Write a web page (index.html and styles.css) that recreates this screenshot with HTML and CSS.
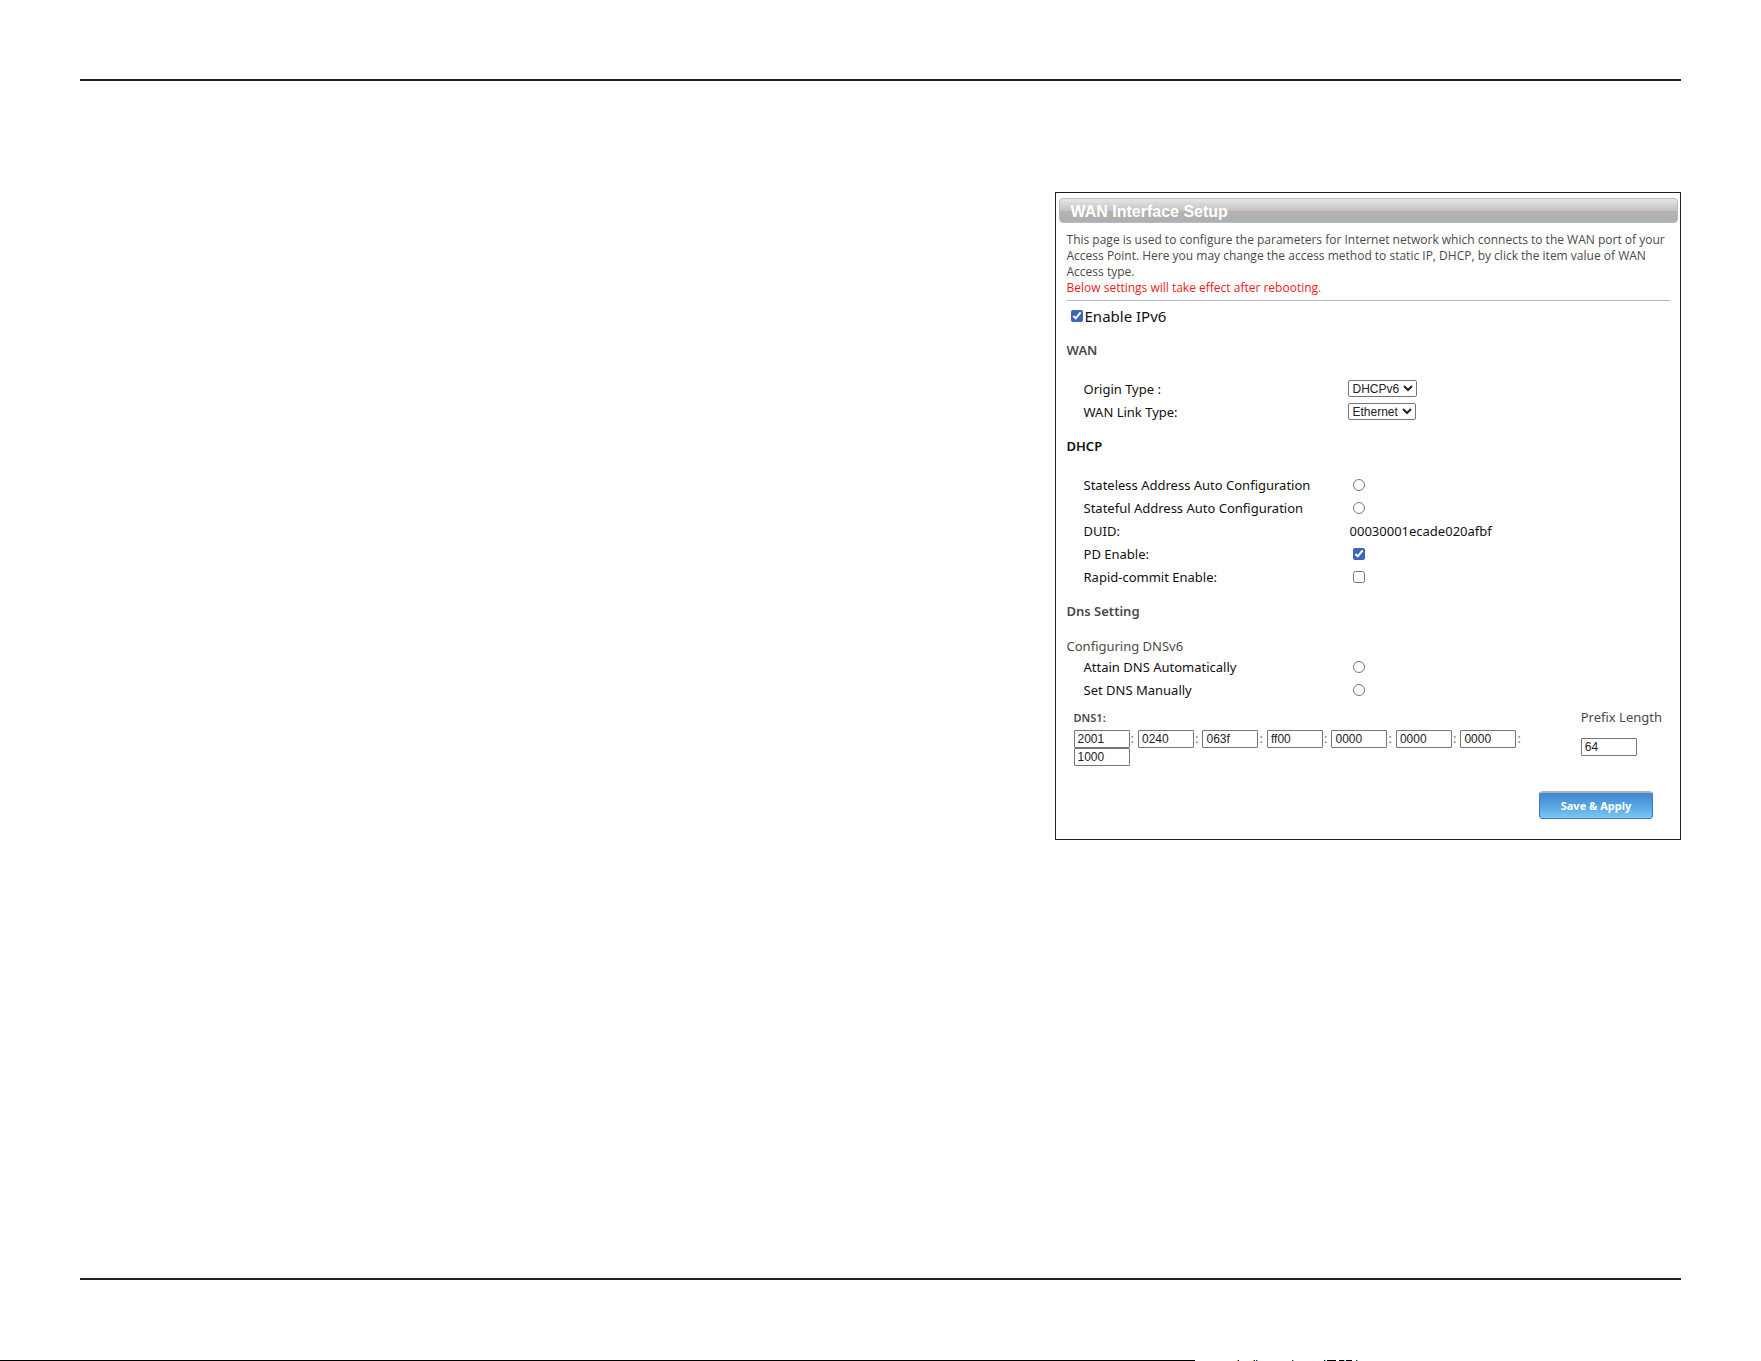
FILE: index.html
```html
<!DOCTYPE html>
<html lang="en">
<head>
    <meta charset="UTF-8">
    <meta name="viewport" content="width=device-width, initial-scale=1.0">
    <title>WAN Interface Setup</title>
    <link rel="stylesheet" href="styles.css">
</head>
<body>
    <div class="page">
        <hr class="page-rule">
        <main class="content">
            <form class="panel">
                <h1 class="panel-title">WAN Interface Setup</h1>
                <div class="panel-body">
                    <div class="intro">
                        <p>This page is used to configure the parameters for Internet network which connects to the WAN port of your Access Point. Here you may change the access method to static IP, DHCP, by click the item value of WAN Access type.</p>
                        <p class="warning">Below settings will take effect after rebooting.</p>
                    </div>

                    <div class="enable-row">
                        <input type="checkbox" id="enableIpv6" checked>
                        <label for="enableIpv6">Enable IPv6</label>
                    </div>

                    <h2>WAN</h2>
                    <div class="rows">
                        <div class="row">
                            <label for="originType">Origin Type :</label>
                            <select id="originType">
                                <option>DHCPv6</option>
                            </select>
                        </div>
                        <div class="row">
                            <label for="linkType">WAN Link Type:</label>
                            <select id="linkType">
                                <option>Ethernet</option>
                            </select>
                        </div>
                    </div>

                    <h2 class="dark">DHCP</h2>
                    <div class="rows">
                        <div class="row">
                            <label for="stateless">Stateless Address Auto Configuration</label>
                            <input type="radio" name="autoConfig" id="stateless">
                        </div>
                        <div class="row">
                            <label for="stateful">Stateful Address Auto Configuration</label>
                            <input type="radio" name="autoConfig" id="stateful">
                        </div>
                        <div class="row">
                            <span>DUID:</span>
                            <span class="duid">00030001ecade020afbf</span>
                        </div>
                        <div class="row">
                            <label for="pdEnable">PD Enable:</label>
                            <input type="checkbox" id="pdEnable" checked>
                        </div>
                        <div class="row">
                            <label for="rapidCommit">Rapid-commit Enable:</label>
                            <input type="checkbox" id="rapidCommit">
                        </div>
                    </div>

                    <h2>Dns Setting</h2>
                    <p class="sub-title">Configuring DNSv6</p>
                    <div class="rows dns-rows">
                        <div class="row">
                            <label for="dnsAuto">Attain DNS Automatically</label>
                            <input type="radio" name="dnsMode" id="dnsAuto">
                        </div>
                        <div class="row">
                            <label for="dnsManual">Set DNS Manually</label>
                            <input type="radio" name="dnsMode" id="dnsManual">
                        </div>
                    </div>

                    <div class="dns">
                        <div class="dns-address">
                            <label class="dns-label" for="dns1">DNS1:</label>
                            <div class="groups">
                                <span><input type="text" id="dns1" value="2001">:</span>
                                <span><input type="text" aria-label="DNS1 group 2" value="0240">:</span>
                                <span><input type="text" aria-label="DNS1 group 3" value="063f">:</span>
                                <span><input type="text" aria-label="DNS1 group 4" value="ff00">:</span>
                                <span><input type="text" aria-label="DNS1 group 5" value="0000">:</span>
                                <span><input type="text" aria-label="DNS1 group 6" value="0000">:</span>
                                <span><input type="text" aria-label="DNS1 group 7" value="0000">:</span>
                                <span><input type="text" aria-label="DNS1 group 8" value="1000"></span>
                            </div>
                        </div>
                        <div class="prefix">
                            <label for="prefixLength">Prefix Length</label>
                            <input type="text" id="prefixLength" value="64">
                        </div>
                    </div>

                    <div class="actions">
                        <button type="button">Save &amp; Apply</button>
                    </div>
                </div>
            </form>
        </main>
        <hr class="page-rule">
    </div>
    <svg class="page-edge" viewBox="0 0 1761 1" preserveAspectRatio="none" shape-rendering="crispEdges" aria-hidden="true">
        <rect width="1195" height="1"/>
        <rect x="1237" width="1" height="1" fill="#fa0"/>
        <rect x="1238" width="1" height="1" fill="#00c"/>
        <rect x="1253" width="1" height="1" fill="#fa0"/>
        <rect x="1254" width="1" height="1" fill="#00c"/>
        <rect x="1256" width="1" height="1" fill="#a00"/>
        <rect x="1257" width="1" height="1" fill="#0ff"/>
        <rect x="1292" width="1" height="1" fill="#a00"/>
        <rect x="1293" width="1" height="1" fill="#0ff"/>
        <rect x="1324" width="1" height="1"/>
        <rect x="1325" width="1" height="1" fill="#0ff"/>
        <rect x="1327" width="9" height="1"/>
        <rect x="1339" width="5" height="1"/>
        <rect x="1344" width="1" height="1" fill="#0ff"/>
        <rect x="1346" width="6" height="1"/>
        <rect x="1356" width="1" height="1" fill="#a00"/>
        <rect x="1357" width="1" height="1" fill="#0ff"/>
    </svg>
</body>
</html>
```
FILE: styles.css
```css
* {
    box-sizing: border-box;
}

body {
    display: flex;
    flex-direction: column;
    min-height: 100vh;
    margin: 0;
    background-color: #fff;
    color: #111;
    font-family: "Noto Sans", "Open Sans", sans-serif;
    font-size: 13px;
    line-height: 16px;
}

h1, h2, p {
    margin: 0;
}

.page {
    display: flex;
    flex-direction: column;
    flex: 1;
    padding: 79px 80px 80px;
}

.page-rule {
    width: 100%;
    height: 2px;
    margin: 0;
    border: none;
    background-color: #231f20;
}

.content {
    display: grid;
    grid-template-columns: 14fr minmax(600px, 9fr);
    align-items: start;
    flex: 1;
    padding: 111px 0;
}

.panel {
    grid-column: 2;
    padding: 5px 2px 20px 3px;
    border: 1px solid #231f20;
}

.panel-title {
    padding: 2px 0 0 11px;
    border: 1px solid #a9c0d3;
    border-radius: 4px;
    background: linear-gradient(#e8e6e4, #c6c4c2 50%, #b5b2b0 52%, #b2aeac);
    color: #fff;
    font-family: "Liberation Sans", Arial, sans-serif;
    font-size: 16px;
    line-height: 21px;
}

.panel-body {
    padding: 9px 8px 0;
}

.intro {
    padding-bottom: 4px;
    border-bottom: 1px solid #b5b5b5;
    color: #4a4a4a;
    font-family: "Open Sans", "Noto Sans", sans-serif;
    font-size: 12px;
}

.intro .warning {
    color: #ed1c24;
}

.enable-row {
    display: flex;
    align-items: center;
    gap: 2px;
    height: 30px;
    padding-left: 4px;
    font-size: 15px;
}

h2 {
    padding: 11px 0 19px;
    color: #4a4a4a;
    font-size: 13px;
    font-weight: 600;
    line-height: 16px;
}

h2.dark {
    color: #111;
}

.rows {
    margin-bottom: 4px;
    padding-left: 17px;
}

.row {
    display: grid;
    grid-template-columns: 264px 1fr;
    align-items: center;
    justify-items: start;
    height: 23px;
}

input[type="checkbox"],
input[type="radio"] {
    width: 12px;
    height: 12px;
    margin: 0;
    accent-color: #3f65b6;
}

.row input {
    margin-left: 5px;
}

.duid {
    padding-left: 2px;
}

select {
    height: 17px;
    padding: 0;
    border: 1px solid #767676;
    border-radius: 2px;
    background-color: #fff;
    color: #222;
    font-family: "Liberation Sans", Arial, sans-serif;
    font-size: 12px;
}

.sub-title {
    padding-bottom: 1px;
    color: #4a4a4a;
}

.dns-rows {
    margin-bottom: 8px;
}

.dns {
    display: flex;
    justify-content: space-between;
    padding: 0 8px 0 7px;
    color: #4a4a4a;
}

.dns-label {
    font-size: 11px;
    font-weight: 600;
}

.dns-address {
    width: 456px;
}

.groups {
    display: flex;
    flex-wrap: wrap;
    column-gap: 4px;
    padding-top: 4px;
    color: #777;
}

.groups span {
    display: flex;
    gap: 1px;
}

input[type="text"] {
    width: 56px;
    height: 18px;
    padding: 0 3px;
    border: 1px solid #767676;
    border-radius: 1px;
    color: #222;
    font-family: "Liberation Sans", Arial, sans-serif;
    font-size: 12px;
}

.prefix {
    display: flex;
    flex-direction: column;
    gap: 13px;
}

.actions {
    display: flex;
    justify-content: flex-end;
    padding: 25px 17px 0 0;
}

button {
    width: 114px;
    height: 28px;
    padding: 0;
    border: 1px solid #3f7cc4;
    border-top: 2px solid #b0b0b0;
    border-radius: 4px;
    background: linear-gradient(#3f87d3, #55a3e0 50%, #7cc8f3);
    color: #fff;
    font-family: "Noto Sans", "Open Sans", sans-serif;
    font-size: 11px;
    font-weight: 700;
}

.page-edge {
    display: block;
    width: 100%;
    height: 1px;
}
```
